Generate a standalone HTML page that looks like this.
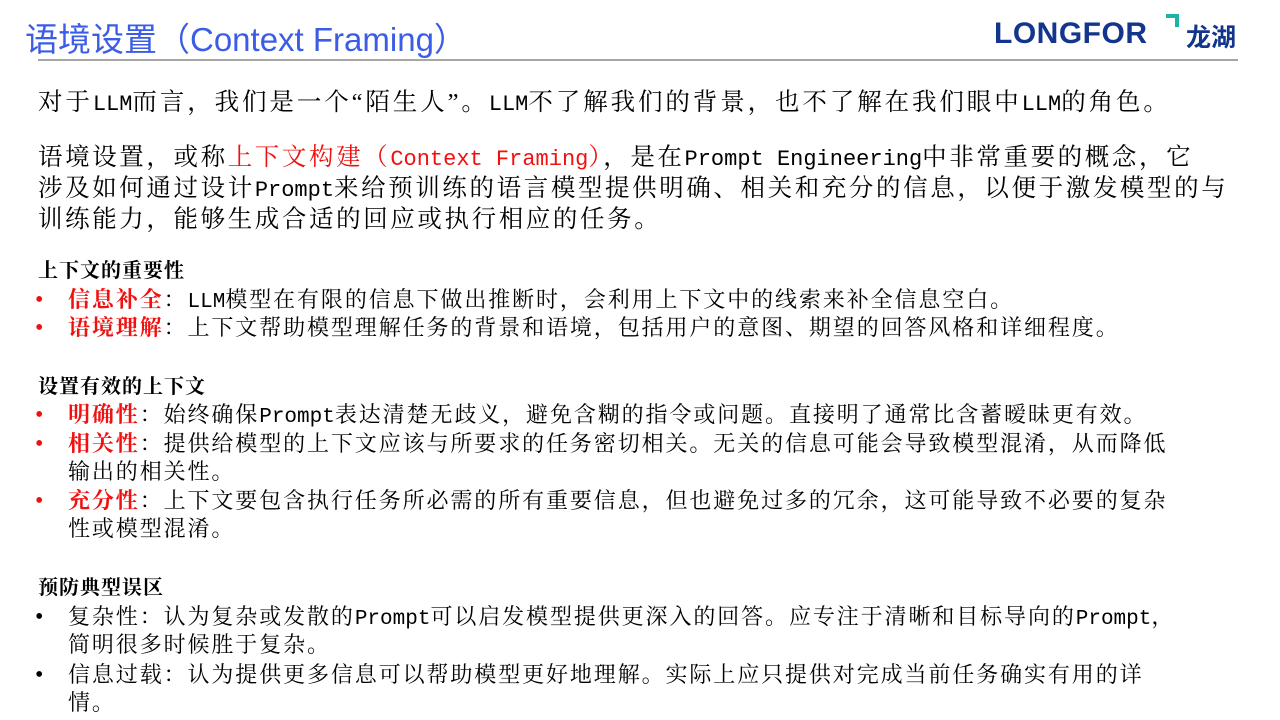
<!DOCTYPE html>
<html><head><meta charset="utf-8"><style>
body{margin:0;width:1280px;height:720px;background:#fff;position:relative;overflow:hidden;font-family:"Liberation Serif","Noto Serif CJK SC",serif;color:#000}
.t{position:absolute;left:25px;top:13px;font-family:"Liberation Sans","Noto Sans CJK SC",sans-serif;font-size:33px;color:#3b5ce6;white-space:nowrap}
.hr{position:absolute;left:38px;top:59px;width:1200px;height:2px;background:#a6a6a6}
.l{position:absolute;white-space:nowrap;line-height:30px;height:30px}
.p{font-size:24.5px;letter-spacing:2.6px;left:38px}
.p .m{font-family:"Liberation Mono",monospace;font-size:22px;letter-spacing:0}
.s{font-size:22px;letter-spacing:1.9px;left:68px}
.s .m{font-family:"Liberation Mono",monospace;font-size:21px;letter-spacing:0}
.h{font-size:20px;font-weight:bold;left:38px;letter-spacing:1px}
.b{position:absolute;left:35px;font-size:24px;line-height:30px}
.r{color:#f01010}
.s .r{font-weight:bold}
.logo{position:absolute;left:994px;top:17px;font-family:"Liberation Sans",sans-serif;font-weight:bold;font-size:30px;color:#13358c;letter-spacing:0.5px}
.logo2{position:absolute;left:1186px;top:21px;font-family:"Noto Sans CJK SC",sans-serif;font-weight:bold;font-size:25px;color:#13358c;line-height:30px}
.mark{position:absolute;left:1166px;top:14px;border-top:4px solid #1cb3a8;border-right:4px solid #1cb3a8;box-sizing:border-box;width:13px;height:13px}
</style></head><body>
<div class="t">语境设置（Context Framing）</div>
<div class="logo">LONGFOR</div><div class="mark"></div><div class="logo2">龙湖</div>
<div class="hr"></div>

<div class="l p" style="top:88px;letter-spacing:2.9px">对于<span class="m">LLM</span>而言，我们是一个“陌生人”。<span class="m">LLM</span>不了解我们的背景，也不了解在我们眼中<span class="m">LLM</span>的角色。</div>
<div class="l p" style="top:143px">语境设置，或称<span class="r">上下文构建（<span class="m">Context Framing</span>）</span>，是在<span class="m">Prompt Engineering</span>中非常重要的概念，它</div>
<div class="l p" style="top:174px">涉及如何通过设计<span class="m">Prompt</span>来给预训练的语言模型提供明确、相关和充分的信息，以便于激发模型的与</div>
<div class="l p" style="top:205px">训练能力，能够生成合适的回应或执行相应的任务。</div>

<div class="l h" style="top:256px">上下文的重要性</div>
<div class="b r" style="top:285px">•</div><div class="l s" style="top:285px"><span class="r">信息补全</span>：<span class="m">LLM</span>模型在有限的信息下做出推断时，会利用上下文中的线索来补全信息空白。</div>
<div class="b r" style="top:313px">•</div><div class="l s" style="top:313px"><span class="r">语境理解</span>：上下文帮助模型理解任务的背景和语境，包括用户的意图、期望的回答风格和详细程度。</div>

<div class="l h" style="top:372px">设置有效的上下文</div>
<div class="b r" style="top:400px">•</div><div class="l s" style="top:400px"><span class="r">明确性</span>：始终确保<span class="m">Prompt</span>表达清楚无歧义，避免含糊的指令或问题。直接明了通常比含蓄暧昧更有效。</div>
<div class="b r" style="top:429px">•</div><div class="l s" style="top:429px"><span class="r">相关性</span>：提供给模型的上下文应该与所要求的任务密切相关。无关的信息可能会导致模型混淆，从而降低</div>
<div class="l s" style="top:457px">输出的相关性。</div>
<div class="b r" style="top:486px">•</div><div class="l s" style="top:486px"><span class="r">充分性</span>：上下文要包含执行任务所必需的所有重要信息，但也避免过多的冗余，这可能导致不必要的复杂</div>
<div class="l s" style="top:514px">性或模型混淆。</div>

<div class="l h" style="top:573px">预防典型误区</div>
<div class="b" style="top:602px">•</div><div class="l s" style="top:602px">复杂性：认为复杂或发散的<span class="m">Prompt</span>可以启发模型提供更深入的回答。应专注于清晰和目标导向的<span class="m">Prompt</span>，</div>
<div class="l s" style="top:630px">简明很多时候胜于复杂。</div>
<div class="b" style="top:660px">•</div><div class="l s" style="top:660px">信息过载：认为提供更多信息可以帮助模型更好地理解。实际上应只提供对完成当前任务确实有用的详</div>
<div class="l s" style="top:688px">情。</div>
</body></html>
